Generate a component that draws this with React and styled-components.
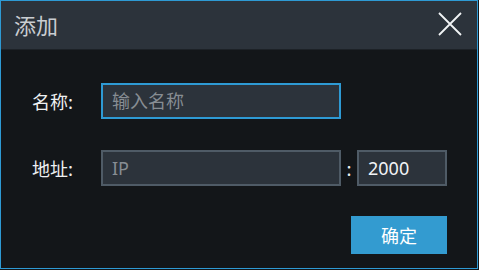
import styled, { createGlobalStyle } from "styled-components";

const Global = createGlobalStyle`
  html, body {
    margin: 0;
    padding: 0;
    background: #131619;
  }
  * { box-sizing: border-box; }
`;

const Dialog = styled.div`
  width: 478px;
  height: 269px;
  border: 1px solid #2e9ad4;
  background: #131619;
  display: flex;
  flex-direction: column;
  font-family: "Noto Sans CJK SC", "Noto Sans", sans-serif;
`;

const Header = styled.div`
  height: 49px;
  flex: none;
  background: #2c333b;
  border-bottom: 1px solid #1d2227;
  display: flex;
  align-items: center;
  justify-content: space-between;
  padding: 0 15px 0 13px;
`;

const Title = styled.span`
  color: #c9cdd1;
  font-size: 22px;
  line-height: 1;
  margin-top: -2px;
`;

const Close = styled.button`
  width: 24px;
  height: 24px;
  padding: 0;
  border: 0;
  background: none;
  cursor: pointer;
  display: flex;
  margin-top: -2px;
`;

const Body = styled.div`
  flex: 1;
  display: flex;
  flex-direction: column;
  padding: 33px 30px 15px 31px;
  gap: 31px;
`;

const Row = styled.div`
  display: flex;
  align-items: center;
`;

const Label = styled.label`
  width: 69px;
  color: #eef0f2;
  font-size: 18px;
`;

const Input = styled.input`
  width: ${(p) => p.$w}px;
  height: 36px;
  background: #2c333b;
  border: 2px solid ${(p) => (p.$active ? "#2e9ad4" : "#4f5b66")};
  outline: none;
  color: #f2f4f6;
  font-family: "Noto Sans", "Noto Sans CJK SC", sans-serif;
  font-size: 18px;
  padding: 0 9px;
  &::placeholder {
    color: #878d93;
  }
`;

const Colon = styled.span`
  width: 16px;
  text-align: center;
  color: #eef0f2;
  font-size: 18px;
`;

const Footer = styled.div`
  display: flex;
  justify-content: flex-end;
  margin-top: -1px;
`;

const Button = styled.button`
  width: 96px;
  height: 38px;
  border: 0;
  background: #339bd0;
  color: #ffffff;
  font-family: "Noto Sans CJK SC", sans-serif;
  font-size: 18px;
  cursor: pointer;
`;

export default function App() {
  return (
    <>
      <Global />
      <Dialog>
        <Header>
          <Title>添加</Title>
          <Close aria-label="close">
            <svg width="24" height="24" viewBox="0 0 24 24">
              <path d="M1 1L23 23M23 1L1 23" stroke="#f2f4f6" strokeWidth="1.8" />
            </svg>
          </Close>
        </Header>
        <Body>
          <Row>
            <Label>名称:</Label>
            <Input $w={240} $active placeholder="输入名称" />
          </Row>
          <Row>
            <Label>地址:</Label>
            <Input $w={240} placeholder="IP" />
            <Colon>:</Colon>
            <Input $w={90} defaultValue="2000" />
          </Row>
          <Footer>
            <Button>确定</Button>
          </Footer>
        </Body>
      </Dialog>
    </>
  );
}
